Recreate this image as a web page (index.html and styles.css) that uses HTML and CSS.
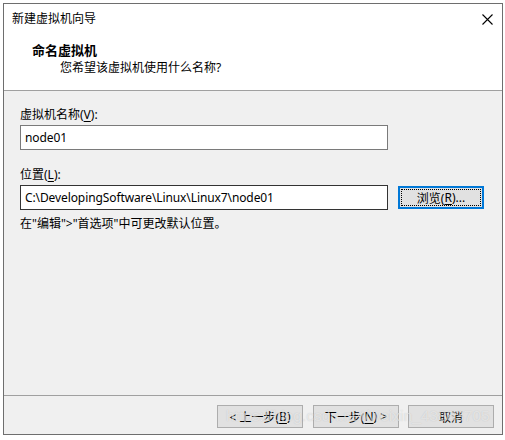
FILE: index.html
```html
<!DOCTYPE html>
<html lang="zh-CN">
<head>
    <meta charset="UTF-8">
    <title>新建虚拟机向导</title>
    <link rel="stylesheet" href="styles.css">
</head>
<body>

<div class="window">
    <!-- Title + header (white area) -->
    <div class="top">
        <div class="titlebar">
            <span class="title-text">新建虚拟机向导</span>
            <span class="close">
                <svg width="11" height="11" viewBox="0 0 11 11">
                    <path d="M0.5 0.5 L10.5 10.5 M10.5 0.5 L0.5 10.5" stroke="#000" stroke-width="1.1" fill="none"/>
                </svg>
            </span>
        </div>
        <div class="header">
            <div class="header-title">命名虚拟机</div>
            <div class="header-sub">您希望该虚拟机使用什么名称?</div>
        </div>
    </div>

    <!-- Body -->
    <div class="content">
        <div class="label">虚拟机名称(<u>V</u>):</div>
        <div class="field">node01</div>

        <div class="label label-second">位置(<u>L</u>):</div>
        <div class="row">
            <div class="field field-dark">C:\DevelopingSoftware\Linux\Linux7\node01</div>
            <div class="btn btn-focus"><span class="focus-ring">浏览(<u>R</u>)...</span></div>
        </div>
        <div class="note">在"编辑"&gt;"首选项"中可更改默认位置。</div>
    </div>

    <!-- Footer buttons -->
    <div class="footer">
        <div class="btn">&lt; 上一步(<u>B</u>)</div>
        <div class="btn">下一步(<u>N</u>) &gt;</div>
        <div class="btn btn-last">取消</div>
        <div class="watermark">https://blog.csdn.net/weixin_43883705</div>
    </div>
</div>

</body>
</html>
```

FILE: styles.css
```css
body {
    margin: 0;
    background-color: #ffffff;
    font-family: "Noto Sans", "Noto Sans CJK SC", sans-serif;
    font-size: 12px;
    color: #000;
}

.window {
    margin: 3px 0 0 3px;
    width: 498px;
    border: 1px solid #6e6e6e;
    background-color: #f0f0f0;
}

/* White area with title and header */
.top {
    background-color: #ffffff;
    border-bottom: 1px solid #a0a0a0;
}

.titlebar {
    display: flex;
    align-items: center;
    height: 30px;
    padding-left: 8px;
}

.title-text {
    flex: 1;
    line-height: 30px;
}

.close {
    width: 30px;
    display: flex;
    justify-content: center;
    align-items: center;
}

.close svg {
    display: block;
}

.header {
    height: 56px;
    box-sizing: border-box;
    padding: 7px 0 0 28px;
}

.header-title {
    font-size: 13px;
    font-weight: bold;
    line-height: 18px;
}

.header-sub {
    line-height: 18px;
    padding-left: 28px;
}

/* Body */
.content {
    height: 304px;
    box-sizing: border-box;
    padding: 16px 0 0 16px;
}

.label {
    line-height: 16px;
    margin-bottom: 2px;
}

.label-second {
    margin-top: 17px;
}

.label u,
.btn u {
    text-decoration-thickness: 1px;
    text-underline-offset: 2px;
}

.field {
    width: 368px;
    height: 25px;
    box-sizing: border-box;
    border: 1px solid #7a7a7a;
    background-color: #fff;
    padding-left: 4px;
    line-height: 23px;
    white-space: nowrap;
    letter-spacing: -0.1px;
}

.field-dark {
    border-color: #333;
}

.row {
    display: flex;
    align-items: center;
    gap: 10px;
}

.note {
    margin-top: 6px;
    line-height: 16px;
}

/* Buttons */
.btn {
    width: 86px;
    height: 23px;
    box-sizing: border-box;
    border: 1px solid #adadad;
    background-color: #e1e1e1;
    display: flex;
    justify-content: center;
    align-items: center;
    white-space: nowrap;
}

.btn-focus {
    border: 2px solid #0078d7;
    padding: 1px;
}

.focus-ring {
    flex: 1;
    align-self: stretch;
    display: flex;
    justify-content: center;
    align-items: center;
    border: 1px dotted #000;
}

.footer {
    position: relative;
    border-top: 1px solid #a0a0a0;
    height: 39px;
    box-sizing: border-box;
    padding: 9px 8px 0 0;
    display: flex;
    justify-content: flex-end;
    align-items: flex-start;
    gap: 10px;
}

.btn-last {
    margin-left: -1px;
}

/* Faint blog watermark laid over the footer */
.watermark {
    position: absolute;
    left: 222px;
    top: 11px;
    font-family: "Liberation Sans", sans-serif;
    font-size: 15.5px;
    color: rgba(255, 255, 255, 0.55);
    text-shadow: 0 0 1px rgba(120, 120, 120, 0.35);
    white-space: nowrap;
    pointer-events: none;
}
```
